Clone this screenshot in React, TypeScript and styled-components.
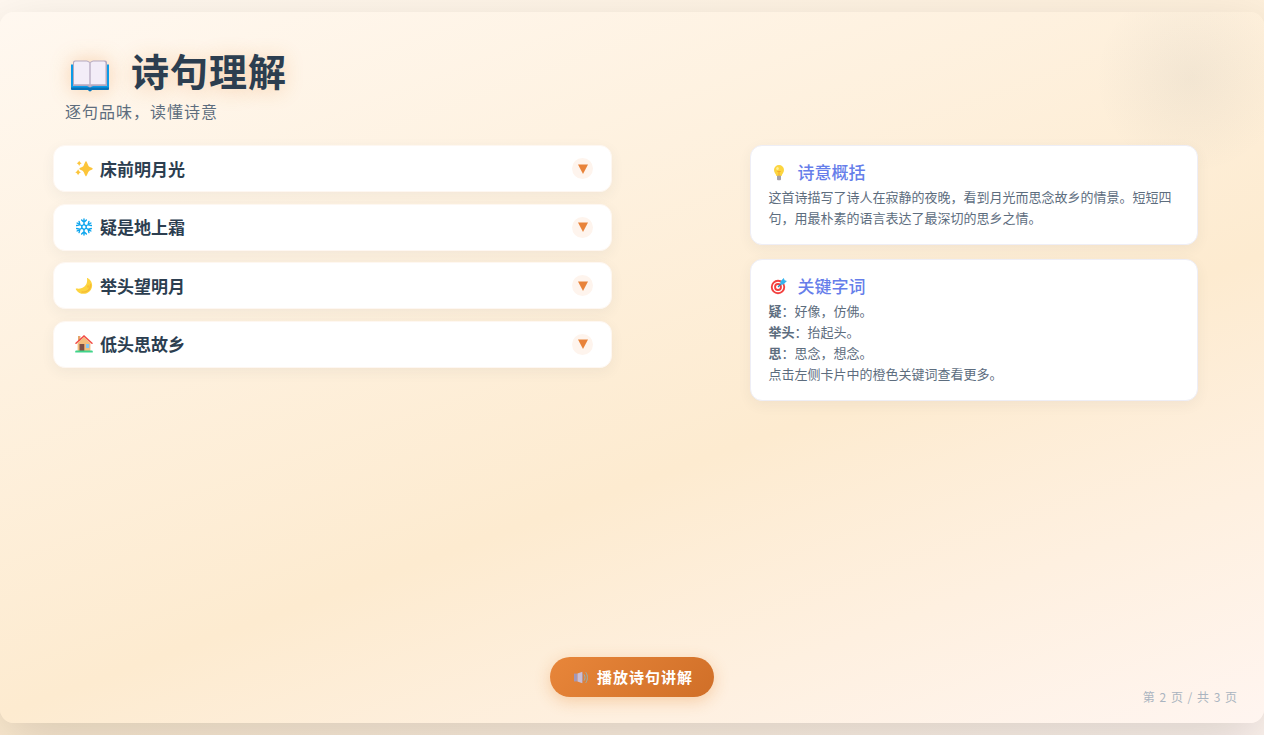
import React, { useState } from "react";
import styled, { createGlobalStyle } from "styled-components";

const GlobalStyle = createGlobalStyle`
  *, *::before, *::after { box-sizing: border-box; }
  body {
    margin: 0;
    min-height: 100vh;
    font-family: "Noto Sans CJK SC", "Noto Sans", sans-serif;
    color: #2c3e50;
    background: linear-gradient(160deg, #fff8f0 0%, #fdebd0 60%, #fff5f0 100%);
  }
  h1, h2, p { margin: 0; }
`;

const Page = styled.div`
  min-height: 100vh;
  padding: 12px 0;
  display: flex;
  overflow: hidden;
`;

const Slide = styled.main`
  position: relative;
  flex: 1;
  min-width: 0;
  display: flex;
  flex-direction: column;
  padding: 34px 66px 26px 53px;
  border-radius: 14px;
  overflow: hidden;
  background: linear-gradient(160deg, #fff8f0 0%, #fdebd0 60%, #fff5f0 100%);
`;

const SlideShadow = styled.div`
  flex: 1;
  min-width: 0;
  display: flex;
  border-radius: 14px;
  box-shadow: 0 20px 60px rgba(0, 0, 0, 0.15);
`;

const Glow = styled.div`
  position: absolute;
  top: -34px;
  right: -27px;
  width: 200px;
  height: 200px;
  border-radius: 50%;
  background: radial-gradient(circle closest-side, rgba(44, 62, 80, 0.05), transparent 96%);
`;

const Header = styled.header`
  padding-left: 12px;
  margin-bottom: 21px;
`;

const Title = styled.h1`
  display: flex;
  align-items: center;
  gap: 22px;
  padding-left: 6px;
  margin-bottom: 4px;
  font-size: 38px;
  line-height: 48px;
  font-weight: 700;
  letter-spacing: 1px;
  text-shadow: 0 2px 20px rgba(230, 126, 34, 0.3);

  svg {
    margin-top: 10px;
    filter: drop-shadow(0 0 10px rgba(230, 126, 34, 0.3));
  }
`;

const Subtitle = styled.p`
  font-size: 16px;
  line-height: 26px;
  font-weight: 400;
  letter-spacing: 1px;
  color: #5d6d7e;
`;

const Columns = styled.div`
  position: relative;
  display: grid;
  grid-template-columns: 5fr 4fr;
  column-gap: 138px;
  align-items: start;
`;

const VerseList = styled.div`
  display: flex;
  flex-direction: column;
  justify-content: space-between;
  min-height: 223px;
`;

const Verse = styled.button`
  display: flex;
  align-items: center;
  gap: 7px;
  width: 100%;
  height: 47px;
  padding: 0 18px 0 21px;
  border: 1px solid #fef7f1;
  border-radius: 12px;
  background: #fff;
  box-shadow: 0 4px 14px rgba(44, 62, 80, 0.06);
  color: #2c3e50;
  font-family: inherit;
  font-size: 17px;
  font-weight: 700;
  line-height: 24px;
  text-align: left;
  cursor: pointer;
`;

const Toggle = styled.span<{ $open: boolean }>`
  display: grid;
  place-items: center;
  width: 21px;
  height: 21px;
  margin-left: auto;
  border-radius: 50%;
  background: #fef4ed;
  transform: ${(p) => (p.$open ? "rotate(180deg)" : "none")};
`;

const Notes = styled.aside`
  display: flex;
  flex-direction: column;
  gap: 14px;
`;

const Note = styled.section`
  padding: 12px 17px 16px;
  border: 1px solid #eeeef6;
  border-radius: 12px;
  background: #fff;
  box-shadow: 0 4px 14px rgba(44, 62, 80, 0.06);
`;

const NoteTitle = styled.h2`
  display: flex;
  align-items: center;
  gap: 9px;
  height: 28px;
  font-size: 17px;
  line-height: 24px;
  font-weight: 500;
  color: #667eea;
`;

const NoteText = styled.p`
  font-size: 13px;
  line-height: 21px;
  color: #5d6d7e;
`;

const Footer = styled.footer`
  margin-top: auto;
  display: flex;
  justify-content: center;
  padding-left: 13px;
`;

const PlayButton = styled.button`
  display: flex;
  align-items: center;
  gap: 8px;
  height: 40px;
  padding: 0 21px 0 23px;
  border: 0;
  border-radius: 20px;
  background: linear-gradient(135deg, #e8863a, #d06f28);
  box-shadow: 0 4px 16px rgba(230, 126, 34, 0.3);
  color: #fff;
  font-family: inherit;
  font-size: 15px;
  font-weight: 700;
  line-height: 24px;
  letter-spacing: 1px;
  cursor: pointer;
`;

const PageNumber = styled.div`
  position: absolute;
  right: 26px;
  bottom: 17px;
  font-size: 12px;
  line-height: 18px;
  letter-spacing: 1px;
  color: #aab4c0;
`;

const BookIcon = () => (
  <svg width="38" height="33" viewBox="0 0 38 33" aria-hidden="true">
    <path d="M0 5.500h38v24a1.500 1.500 0 0 1-1.500 1.500H21l-2 1.500-2-1.500H1.500A1.500 1.500 0 0 1 0 29.500z" fill="#0b9be8" />
    <path d="M0 28.500h38v1a1.500 1.500 0 0 1-1.500 1.500H21l-2 1.500-2-1.500H1.500A1.500 1.500 0 0 1 0 29.500z" fill="#0872b8" />
    <path d="M2 3.500A2 2 0 0 1 4 1.500H16l3 1.500 3-1.500h12a2 2 0 0 1 2 2v23.500H22l-3 1.500-3-1.500H2z" fill="#b4a8bf" />
    <path d="M3 4a1.500 1.500 0 0 1 1.500-1.500H16l2.500 1.300V25.200H3zM19.500 3.800L22 2.500h11A1.500 1.500 0 0 1 34.500 4v21.200h-15z" fill="#f3edf8" />
    <path d="M19 3v25" stroke="#c2b7cb" strokeWidth="1" />
  </svg>
);

const SparklesIcon = () => (
  <svg width="18" height="18" viewBox="0 0 18 18" fill="#fcc53a" aria-hidden="true">
    <path d="M11 1c.8.6 1.500 2.700 2.200 4.300.5 1 .9 1.400 1.800 1.800 1.300.6 2.600 1 2.800 1.700-.2.700-1.500 1.100-2.800 1.700-.9.400-1.300.8-1.800 1.800-.7 1.600-1.400 3.700-2.200 4.300-.8-.6-1.500-2.700-2.200-4.300-.5-1-.9-1.400-1.800-1.800-1.300-.6-2.500-1-2.700-1.700.2-.7 1.400-1.100 2.700-1.700.9-.4 1.300-.8 1.800-1.800C9.500 3.700 10.200 1.600 11 1z" />
    <path d="M4.200.8c.6 1.300 1 1.800 2.500 2.500-1.500.7-1.900 1.200-2.500 2.600-.6-1.400-1-1.900-2.500-2.600C3.200 2.600 3.600 2.100 4.200.8zM3.100 9.200c.7 1.700 1.200 2.300 2.900 3-1.700.7-2.200 1.300-2.900 3-.7-1.700-1.200-2.300-2.900-3 1.700-.7 2.200-1.300 2.900-3z" />
  </svg>
);

const SnowflakeIcon = () => (
  <svg width="18" height="18" viewBox="0 0 18 18" fill="none" stroke="#0ca5ee" strokeWidth="1.400" strokeLinecap="round" aria-hidden="true">
    {[0, 60, 120, 180, 240, 300].map((angle) => (
      <path key={angle} transform={`rotate(${angle} 9 9)`} d="M9 6.500V1M6.600 1.900L9 4.300l2.400-2.400M9 6.500l2.200 1.300" />
    ))}
  </svg>
);

const MoonIcon = () => (
  <svg width="18" height="18" viewBox="0 0 18 18" aria-hidden="true">
    <path d="M12.600 1c6.300 3.500 6 12.300-.7 15.200C7.600 18 2.700 16 .9 12.400c-.3-.6.1-.9.700-.8C8.600 12.500 13 8 12 1.500c-.1-.5.200-.7.600-.5z" fill="#fdd43f" />
    <path d="M15.500 7.500c.5 4.500-3.500 8.300-8.500 7.500" fill="none" stroke="#f5bb35" strokeWidth="1.300" strokeLinecap="round" />
    <circle cx="13.200" cy="9.500" r="1.200" fill="#f9c034" />
  </svg>
);

const HouseIcon = () => (
  <svg width="18" height="18" viewBox="0 0 18 18" aria-hidden="true">
    <path d="M3 1h2.400v5H3z" fill="#e5a66d" />
    <path d="M2.600 8L9 2l6.400 6v8H2.600z" fill="#f3bd7c" />
    <path d="M4.500 9h4.800v7H4.500z" fill="#7d4f45" />
    <path d="M11 9h3.200v4H11z" fill="#83c6f5" />
    <path d="M1 8.200L9 1l8 7.200" fill="none" stroke="#f24a45" strokeWidth="1.500" strokeLinecap="round" />
    <path d="M1.200 15.600h15.600a1 1 0 0 1 1 1v.9H.2v-.9a1 1 0 0 1 1-1z" fill="#3fd48a" />
  </svg>
);

const BulbIcon = () => (
  <svg width="20" height="18" viewBox="0 0 20 18" aria-hidden="true">
    <path d="M11 2a5 5 0 0 1 5 5c0 2.700-2 3.800-2.400 6H8.400C8 10.800 6 9.700 6 7a5 5 0 0 1 5-5z" fill="#fcd53f" />
    <path d="M9.300 8.500h3.400M11 8.500V13" stroke="#f7a928" strokeWidth="1" />
    <ellipse cx="9.500" cy="5.500" rx="1.300" ry="1.600" fill="#ffee9a" />
    <path d="M9 12.800h4v3.400a1 1 0 0 1-1 1h-2a1 1 0 0 1-1-1z" fill="#a5a1a8" />
  </svg>
);

const TargetIcon = () => (
  <svg width="20" height="18" viewBox="0 0 20 18" aria-hidden="true">
    <circle cx="10" cy="10" r="7.200" fill="#f3403e" />
    <circle cx="10" cy="10" r="5.300" fill="#fff" />
    <circle cx="10" cy="10" r="3.900" fill="#f3403e" />
    <circle cx="10" cy="10" r="2" fill="#fff" />
    <path d="M10 10l4-4" stroke="#2387bd" strokeWidth="1.200" />
    <path d="M12.300 4.500l3.500-3.500.8 2.300 2.300.8-3.500 3.500-2.600-.4z" fill="#35b4ee" />
  </svg>
);

const SpeakerIcon = () => (
  <svg width="16" height="14" viewBox="0 0 16 14" fill="none" aria-hidden="true">
    <path d="M1 3.600h3.500v7.800H1z" fill="#a297b8" />
    <path d="M4.500 3.600L9.300 1.700v11.600l-4.800-1.900z" fill="#c8bed8" />
    <path d="M9.300 1.700c.9 2.600.9 9 0 11.600z" fill="#a79bb5" />
    <path d="M11.300 4.800c1 1.600 1 3.900 0 5.500M13 2.600c1.900 2.800 1.900 7.100 0 9.900" stroke="#8db4bd" strokeWidth="1" strokeLinecap="round" />
  </svg>
);

const verses = [
  { text: "床前明月光", Icon: SparklesIcon },
  { text: "疑是地上霜", Icon: SnowflakeIcon },
  { text: "举头望明月", Icon: MoonIcon },
  { text: "低头思故乡", Icon: HouseIcon },
];

export default function App() {
  const [open, setOpen] = useState<number | null>(null);

  return (
    <>
      <GlobalStyle />
      <Page>
        <SlideShadow>
          <Slide>
            <Glow />
            <Header>
              <Title>
                <BookIcon />
                诗句理解
              </Title>
              <Subtitle>逐句品味，读懂诗意</Subtitle>
            </Header>
            <Columns>
              <VerseList>
                {verses.map(({ text, Icon }, i) => (
                  <Verse
                    key={text}
                    type="button"
                    aria-expanded={open === i}
                    onClick={() => setOpen(open === i ? null : i)}
                  >
                    <Icon />
                    {text}
                    <Toggle $open={open === i}>
                      <svg width="10" height="10" viewBox="0 0 10 10" aria-hidden="true">
                        <path d="M0 .5h10L5 10z" fill="#e8833a" />
                      </svg>
                    </Toggle>
                  </Verse>
                ))}
              </VerseList>
              <Notes>
                <Note>
                  <NoteTitle>
                    <BulbIcon />
                    诗意概括
                  </NoteTitle>
                  <NoteText>
                    这首诗描写了诗人在寂静的夜晚，看到月光而思念故乡的情景。短短四句，用最朴素的语言表达了最深切的思乡之情。
                  </NoteText>
                </Note>
                <Note>
                  <NoteTitle>
                    <TargetIcon />
                    关键字词
                  </NoteTitle>
                  <NoteText>
                    <strong>疑</strong>：好像，仿佛。
                    <br />
                    <strong>举头</strong>：抬起头。
                    <br />
                    <strong>思</strong>：思念，想念。
                    <br />
                    点击左侧卡片中的橙色关键词查看更多。
                  </NoteText>
                </Note>
              </Notes>
            </Columns>
            <Footer>
              <PlayButton type="button">
                <SpeakerIcon />
                播放诗句讲解
              </PlayButton>
            </Footer>
            <PageNumber>第 2 页 / 共 3 页</PageNumber>
          </Slide>
        </SlideShadow>
      </Page>
    </>
  );
}
